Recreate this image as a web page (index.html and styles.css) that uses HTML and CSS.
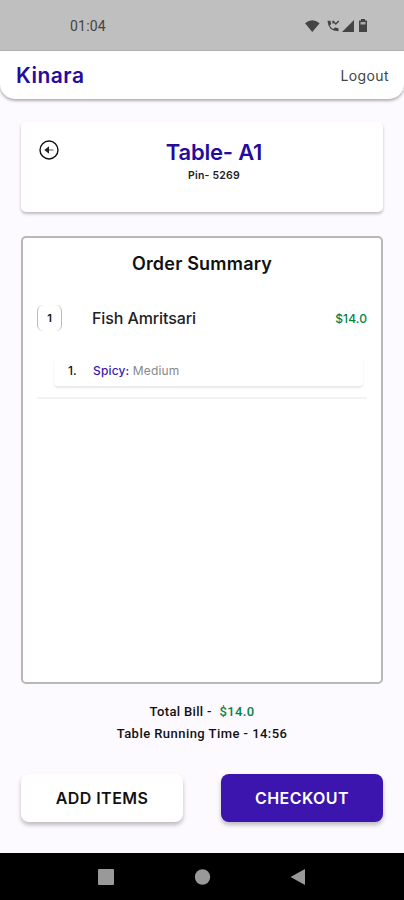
FILE: index.html
```html
<!DOCTYPE html>
<html lang="en">
<head>
<meta charset="utf-8">
<title>Kinara</title>
<link rel="stylesheet" href="styles.css">
</head>
<body>
<div class="statusbar">
  <span class="clock">01:04</span>
  <svg class="status-icons" width="66" height="16" viewBox="0 0 66 16">
    <path d="M1 5.200Q8.300 -.8 15.600 5.200L8.300 14Z"/>
    <path d="M23.500 2.800H26.500L27.200 6L25.700 7.500Q27 9.800 29.200 11L31 9.500L34.500 10.300V13.300Q24 13.300 23.500 2.800Z"/>
    <path class="thin" d="M29 2.800V5.500M29 3L31.800 6L34.800 3"/>
    <path d="M50 2V14H38Z"/>
    <path d="M57 2.500V1H61V2.500H63V14H55V2.500Z"/>
    <path class="gap" d="M56.500 4H61.500V6.500H56.500Z"/>
  </svg>
</div>
<header class="appbar">
  <span class="brand">Kinara</span>
  <span class="logout">Logout</span>
</header>
<main class="content">
  <section class="table-card">
    <svg class="back" width="20" height="20" viewBox="0 0 20 20">
      <circle cx="10" cy="10" r="9"/>
      <path class="shaft" d="M14.500 10H8"/>
      <path class="head" d="M10 6.300L5.300 10L10 13.700Z"/>
    </svg>
    <div class="table-info">
      <h1 class="table-name">Table- A1</h1>
      <p class="pin">Pin- 5269</p>
    </div>
  </section>
  <section class="summary">
    <h2 class="summary-title">Order Summary</h2>
    <div class="item">
      <span class="qty">1</span>
      <span class="item-name">Fish Amritsari</span>
      <span class="price">$14.0</span>
    </div>
    <div class="option">
      <span class="option-no">1.</span>
      <span class="option-text"><span class="option-key">Spicy:</span> Medium</span>
    </div>
    <div class="divider"></div>
  </section>
  <div class="totals">
    <p class="bill">Total Bill - <span class="amount">$14.0</span></p>
    <p class="time">Table Running Time - 14:56</p>
  </div>
  <div class="actions">
    <button class="btn">ADD ITEMS</button>
    <button class="btn primary">CHECKOUT</button>
  </div>
</main>
<nav class="navbar">
  <svg width="404" height="47" viewBox="0 0 404 47">
    <rect x="98" y="16" width="16" height="16" rx="1"/>
    <circle cx="202.500" cy="24" r="7.700"/>
    <path d="M290.500 24L305 16V32Z"/>
  </svg>
</nav>
</body>
</html>
```
FILE: styles.css
```css
* { box-sizing: border-box; }
body {
  margin: 0;
  width: 404px;
  height: 900px;
  display: flex;
  flex-direction: column;
  overflow: hidden;
  background: #fdfaff;
  color: #111;
  font-family: Inter, "Liberation Sans", sans-serif;
}
h1, h2, p { margin: 0; white-space: nowrap; }
.statusbar {
  height: 51px;
  flex: none;
  display: flex;
  align-items: center;
  justify-content: space-between;
  padding: 2px 34px 0 70px;
  background: #bfbfbf;
  border-bottom: 1px solid #b2b2b2;
}
.clock { font: 14px/16px Roboto, sans-serif; letter-spacing: .2px; color: #444; }
.status-icons { fill: #444; }
.status-icons .thin { fill: none; stroke: #444; stroke-width: 1.400; }
.status-icons .gap { fill: #aaa; }
.appbar {
  height: 48px;
  flex: none;
  display: flex;
  align-items: center;
  justify-content: space-between;
  padding: 0 15px 0 16px;
  background: #fff;
  border-radius: 0 0 15px 15px;
  box-shadow: 0 2px 3px rgba(0, 0, 0, .3);
}
.brand { font-size: 21px; font-weight: 600; letter-spacing: .5px; color: #250c9c; }
.logout { font-size: 14px; letter-spacing: .4px; color: #444; }
.content {
  flex: 1;
  display: flex;
  flex-direction: column;
  padding: 23px 21px 0;
}
.table-card {
  height: 90px;
  display: flex;
  padding: 17px 18px 0;
  background: #fff;
  border-radius: 5px;
  box-shadow: 0 2px 3px rgba(0, 0, 0, .25);
}
.back { flex: none; margin-top: 1px; fill: none; stroke: #111; stroke-width: 1.400; }
.back .shaft { stroke: #888; }
.back .head { fill: #222; stroke: none; }
.table-info { flex: 1; padding-left: 4px; text-align: center; }
.table-name { font-size: 22px; line-height: 26px; font-weight: 600; letter-spacing: -.2px; color: #250c9c; }
.pin { font-size: 10.500px; line-height: 14px; font-weight: 600; letter-spacing: .2px; margin-top: 4px; color: #222; }
.summary {
  height: 448px;
  margin-top: 24px;
  padding: 14px 14px 0;
  background: #fff;
  border: 2px solid #b8b8b8;
  border-radius: 5px;
}
.summary-title { font-size: 18px; line-height: 24px; font-weight: 600; letter-spacing: .2px; text-align: center; }
.item { display: flex; align-items: center; height: 26px; margin-top: 29px; }
.qty {
  width: 25px;
  height: 26px;
  border: 1px solid #bbb;
  border-width: 0 1px;
  border-radius: 6px;
  font-size: 11px;
  line-height: 26px;
  font-weight: 600;
  text-align: center;
}
.item-name { flex: 1; margin-left: 30px; font-size: 16px; font-weight: 500; letter-spacing: -.1px; color: #222; }
.price { font-size: 12px; font-weight: 500; letter-spacing: .1px; color: #078346; }
.option {
  display: flex;
  align-items: center;
  height: 31px;
  margin: 24px 4px 0 17px;
  padding-left: 14px;
  border-radius: 4px;
  box-shadow: 0 2px 2px rgba(0, 0, 0, .09);
  font-size: 12px;
}
.option-no { width: 25px; font-weight: 500; }
.option-text { letter-spacing: .15px; color: #888; }
.option-key { color: #3a1ba5; font-weight: 500; }
.divider { height: 2px; margin-top: 11px; background: #f2f2f2; }
.totals {
  margin-top: 17px;
  font: 500 13px/22px Roboto, sans-serif;
  letter-spacing: .45px;
  text-align: center;
}
.bill { letter-spacing: .35px; }
.amount { margin-left: 4px; color: #078346; }
.actions { display: flex; justify-content: space-between; margin-top: 29px; }
.btn {
  width: 162px;
  height: 48px;
  padding: 0;
  border: 0;
  border-radius: 8px;
  background: #fff;
  color: #111;
  font: 600 16px/20px Inter, sans-serif;
  letter-spacing: .45px;
  box-shadow: 0 3px 4px rgba(0, 0, 0, .25);
}
.primary { background: #3b15ad; color: #fff; }
.navbar { height: 47px; flex: none; background: #000; }
.navbar svg { display: block; fill: #999; }
```
